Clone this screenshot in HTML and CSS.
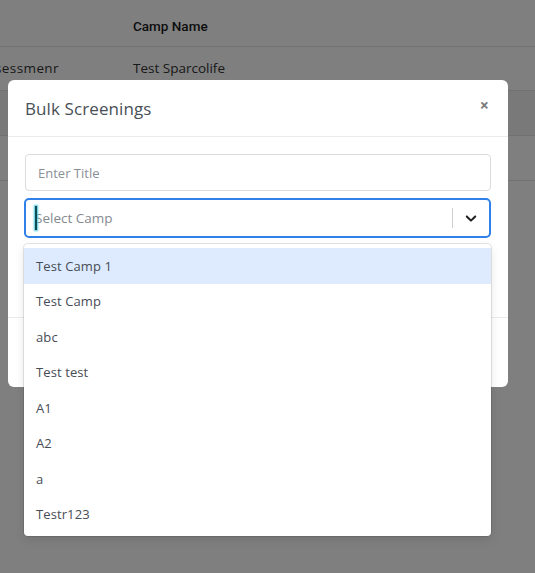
FILE: index.html
```html
<!DOCTYPE html>
<html>
<head>
<meta charset="utf-8">
<link rel="stylesheet" href="styles.css">
</head>
<body>
<div class="page">
  <div class="table">
    <div class="row head"><div class="c1"></div><div class="c2">Camp Name</div></div>
    <div class="row r2"><div class="c1"><span class="cut">sessmenr</span></div><div class="c2">Test Sparcolife</div></div>
    <div class="row hl"><div class="c1"></div><div class="c2"></div></div>
    <div class="row"><div class="c1"></div><div class="c2"></div></div>
  </div>
</div>
<div class="overlay"></div>
<div class="modal">
  <div class="m-head">
    <h5 class="m-title">Bulk Screenings</h5>
    <span class="close">&#215;</span>
  </div>
  <div class="m-body">
    <div class="input">Enter Title</div>
    <div class="select-wrap">
      <div class="select">
        <div class="value"><span class="caret"></span><span class="ph">Select Camp</span></div>
        <span class="sep"></span>
        <span class="chev"><svg width="18" height="18" viewBox="0 0 20 20"><path d="M4.516 7.548c0.436-0.446 1.043-0.481 1.576 0l3.908 3.747 3.908-3.747c0.533-0.481 1.141-0.446 1.574 0 0.436 0.445 0.408 1.197 0 1.615-0.406 0.418-4.695 4.502-4.695 4.502-0.217 0.223-0.502 0.335-0.787 0.335s-0.570-0.112-0.789-0.335c0 0-4.287-4.084-4.695-4.502s-0.436-1.17 0-1.615z" fill="#1f1f1f"/></svg></span>
      </div>
      <div class="menu">
        <div class="opt active">Test Camp 1</div>
        <div class="opt">Test Camp</div>
        <div class="opt">abc</div>
        <div class="opt">Test test</div>
        <div class="opt">A1</div>
        <div class="opt">A2</div>
        <div class="opt">a</div>
        <div class="opt">Testr123</div>
      </div>
    </div>
  </div>
  <div class="m-foot"></div>
</div>
</body>
</html>
```
FILE: styles.css
```css
html, body { margin: 0; padding: 0; }
body {
  width: 535px; height: 573px; overflow: hidden; position: relative;
  background: #fff;
  font-family: "Open Sans", "Noto Sans", sans-serif;
}
.table { width: 100%; }
.row { display: flex; height: 44px; align-items: center; border-bottom: 1px solid #dee2e6; font-size: 13.5px; color: #333; }
.row.head { height: 47px; padding-top: 5px; box-sizing: border-box; font-family: Roboto, sans-serif; font-weight: 500; color: #1a1a1a; font-size: 13.5px; }
.row.r2 { padding-bottom: 2px; box-sizing: border-box; }
.row.hl { background: #f2f2f2; }
.c1 { width: 133px; flex: none; overflow: hidden; }
.cut { display: inline-block; margin-left: -5px; letter-spacing: 0.4px; }
.c2 { flex: 1; }
.overlay { position: absolute; inset: 0; background: rgba(0,0,0,0.5); }
.modal {
  position: absolute; left: 8px; top: 80px; width: 500px; height: 307px;
  background: #fff; border-radius: 6px;
  display: flex; flex-direction: column;
}
.m-head {
  height: 57px; box-sizing: border-box; border-bottom: 1px solid #e9ecef;
  display: flex; align-items: center; justify-content: space-between;
  padding: 0 19px 0 17px;
}
.m-title { margin: 0; font-size: 17px; font-weight: 500; color: #495057; letter-spacing: 0.1px; }
.close { font-size: 16px; font-weight: 700; color: #7a7a7a; margin-top: -6px; }
.m-body { padding: 17px 17px 0 17px; flex: 1; position: relative; }
.m-foot { height: 69px; border-top: 1px solid #e9ecef; }
.input {
  height: 37px; box-sizing: border-box; border: 1px solid #dcdcdc; border-radius: 4px;
  padding: 0 12px; display: flex; align-items: center;
  font-size: 13px; color: #8a8f96;
}
.select-wrap { position: relative; margin-top: 7px; }
.select {
  height: 40px; box-sizing: border-box; border: 2px solid #2f80e8; border-radius: 5px;
  margin-left: -1px; display: flex; align-items: center;
}
.value { flex: 1; display: flex; align-items: center; padding-left: 9px; font-size: 13.5px; color: #858a91; }
.caret { width: 2px; height: 24px; background: #0e4d57; box-shadow: 0 0 2px 1px #49c6d8; margin-right: -2px; position: relative; z-index: 1; }
.sep { width: 1px; height: 20px; background: #cfcfcf; }
.chev { width: 36px; display: flex; justify-content: center; align-items: center; }
.menu {
  position: absolute; left: -1px; right: 0; top: 46px;
  background: #fff; border-radius: 4px; padding: 4px 0;
  box-shadow: 0 0 0 1px rgba(0,0,0,0.1), 0 4px 11px rgba(0,0,0,0.1);
  z-index: 5;
}
.opt { height: 35.5px; box-sizing: border-box; padding: 0 12px; display: flex; align-items: center; font-size: 13px; color: #474d55; letter-spacing: 0.1px; }
.opt.active { background: #deebff; }
```
